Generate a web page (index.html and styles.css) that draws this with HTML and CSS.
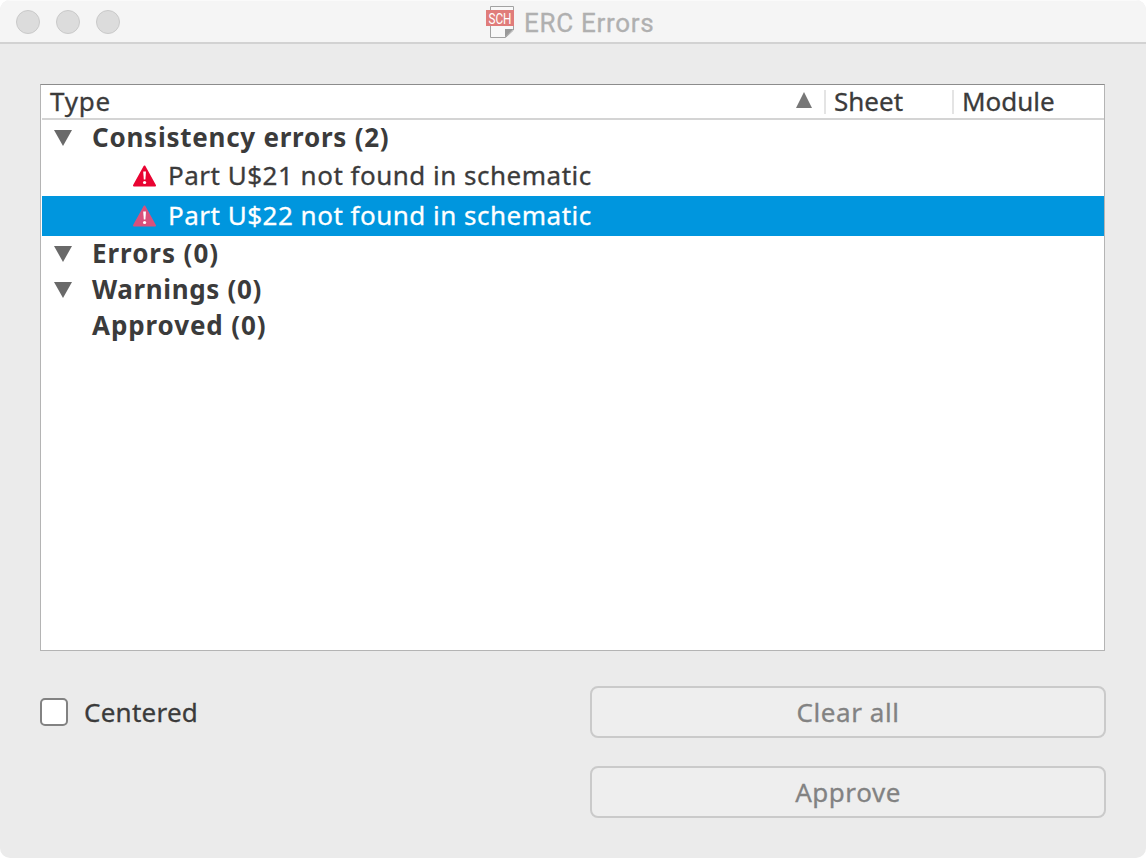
FILE: index.html
```html
<!DOCTYPE html>
<html lang="en">
<head>
<meta charset="utf-8">
<title>ERC Errors</title>
<link rel="stylesheet" href="styles.css">
</head>
<body>
<div class="window">
  <header class="titlebar">
    <div class="lights"><i class="light"></i><i class="light"></i><i class="light"></i></div>
    <div class="title">
      <svg class="doc" width="32" height="34" viewBox="0 0 32 34">
        <path d="M5.500 1.500h23v23.500l-8 7.500h-15z" fill="#f8f8f8" stroke="#a2a2a2"/>
        <path d="M20 24h8.500l-8.500 8.500z" fill="#999"/>
        <rect x="1" y="5" width="28" height="16" fill="#e07c7a"/>
        <text x="15" y="18.500" class="doc-label" textLength="23" lengthAdjust="spacingAndGlyphs">SCH</text>
      </svg>
      <span class="title-text">ERC Errors</span>
    </div>
  </header>
  <main class="content">
    <section class="table">
      <div class="head">
        <div class="col col-type"><span class="t-type">Type</span><svg class="sort" width="16" height="16" viewBox="0 0 16 16"><path d="M8 0l8 16H0z" fill="#777"/></svg></div>
        <div class="col col-sheet"><span class="t-sheet">Sheet</span></div>
        <div class="col col-module"><span class="t-module">Module</span></div>
      </div>
      <div class="row group"><svg class="arrow" width="18" height="16" viewBox="0 0 18 16"><path d="M0 0h18L9 16z" fill="#696969"/></svg><span class="t-cons">Consistency errors (2)</span></div>
      <div class="row item"><svg class="warn" width="24" height="22" viewBox="0 0 24 22"><path d="M11.500 1.500L22 20.500H1z" fill="#e90432" stroke="#e90432" stroke-width="2" stroke-linejoin="round"/><path d="M10.200 6.500h2.800l-.6 8h-1.600z" fill="#fff"/><circle cx="11.600" cy="17.500" r="1.600" fill="#fff"/></svg><span class="t-part">Part U$21 not found in schematic</span></div>
      <div class="row item selected"><svg class="warn" width="24" height="22" viewBox="0 0 24 22"><path d="M11.500 1.500L22 20.500H1z" fill="#d9517c" stroke="#d9517c" stroke-width="2" stroke-linejoin="round"/><path d="M10.200 6.500h2.800l-.6 8h-1.600z" fill="#fff"/><circle cx="11.600" cy="17.500" r="1.600" fill="#fff"/></svg><span class="t-part">Part U$22 not found in schematic</span></div>
      <div class="row group"><svg class="arrow" width="18" height="16" viewBox="0 0 18 16"><path d="M0 0h18L9 16z" fill="#696969"/></svg><span class="t-err">Errors (0)</span></div>
      <div class="row group"><svg class="arrow" width="18" height="16" viewBox="0 0 18 16"><path d="M0 0h18L9 16z" fill="#696969"/></svg><span class="t-warn">Warnings (0)</span></div>
      <div class="row group"><span class="arrow"></span><span class="t-app">Approved (0)</span></div>
    </section>
    <footer class="footer">
      <div class="check"><span class="box"></span><span class="t-cent">Centered</span></div>
      <div class="buttons">
        <button class="btn" disabled><span>Clear all</span></button>
        <button class="btn" disabled><span>Approve</span></button>
      </div>
    </footer>
  </main>
</div>
</body>
</html>
```
FILE: styles.css
```css
* { box-sizing: border-box; }
body { margin: 0; background: #fff; font-family: "Noto Sans", "Open Sans", sans-serif; font-size: 26px; color: #3b3b3b; -webkit-text-stroke: 0.3px currentColor; }
.window { width: 1146px; height: 858px; background: #ebebeb; border-radius: 10px; overflow: hidden; display: flex; flex-direction: column; }
.titlebar { height: 44px; background: #f5f5f5; border-top: 1px solid #fafafa; border-bottom: 2px solid #d2d2d2; display: flex; align-items: center; padding: 2px 0 0 16px; }
.lights { display: flex; gap: 16px; width: 468px; margin-top: -1px; }
.light { width: 24px; height: 24px; border-radius: 50%; background: #dcdcdc; border: 1px solid #c9c9c9; }
.title { display: flex; align-items: center; gap: 7px; padding-left: 1px; }
.doc { display: block; margin-top: -2px; }
.doc-label { font: 14px Roboto, sans-serif; fill: #fff; text-anchor: middle; -webkit-text-stroke: 0; }
.title-text { font: 26px/30px Roboto, Inter, sans-serif; color: #b0b0b0; letter-spacing: 0.7px; }
.content { flex: 1; padding: 40px 40px 0; }
.table { width: 1065px; height: 567px; background: #fff; border: 1px solid #b4b4b4; border-top-color: #8c8c8c; }
.head { height: 35px; border-bottom: 2px solid #d4d4d4; display: flex; align-items: center; margin-left: 1px; }
.col { height: 24px; line-height: 20px; display: flex; align-items: center; }
.col span { margin-top: -2px; }
.col-type { width: 782px; justify-content: space-between; padding: 0 12px 0 8px; }
.sort { margin-top: -3px; }
.col-sheet, .col-module { border-left: 2px solid #e4e4e4; padding-left: 8px; }
.col-sheet { width: 128px; }
.row { height: 36px; display: flex; align-items: center; line-height: 34px; white-space: nowrap; margin-left: 1px; }
.row span { padding-bottom: 2px; }
.group { font-weight: 700; padding-left: 12px; -webkit-text-stroke: 0; }
.arrow { width: 18px; margin-right: 20px; flex: none; }
.group .arrow { margin-bottom: 1px; }
.item { height: 40px; padding-left: 91px; }
.warn { margin-right: 11px; flex: none; }
.selected { background: #0096de; color: #fff; }
.t-type { letter-spacing: 0.8px; }
.t-cons { letter-spacing: 0.75px; }
.t-part { letter-spacing: 0.5px; }
.t-err { letter-spacing: 0.95px; }
.t-warn { letter-spacing: 0.65px; }
.t-app { letter-spacing: 0.9px; }
.t-cent { letter-spacing: 0.25px; }
.footer { display: flex; justify-content: space-between; padding-top: 35px; }
.check { height: 52px; display: flex; align-items: center; gap: 16px; }
.box { width: 28px; height: 28px; border: 2px solid #828282; border-radius: 5px; background: #fff; }
.buttons { display: flex; flex-direction: column; gap: 28px; }
.btn { width: 516px; height: 52px; border: 2px solid #cacaca; border-radius: 8px; background: #eee; color: #828282; font: inherit; letter-spacing: 0.55px; padding: 0; }
```
